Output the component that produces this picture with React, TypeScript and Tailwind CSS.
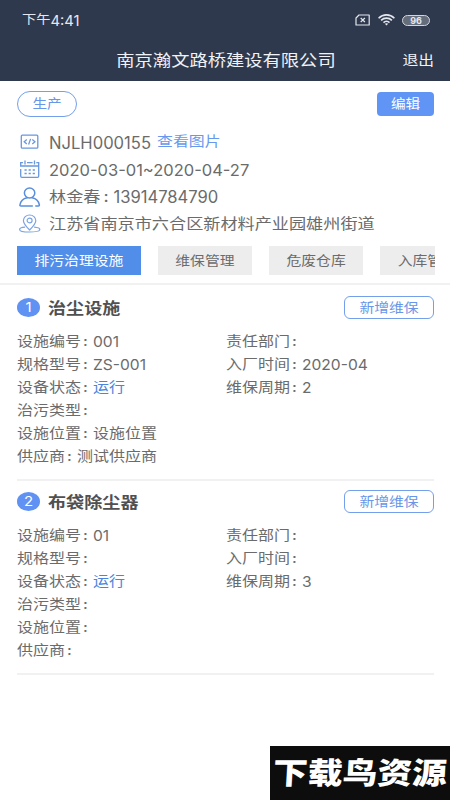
import type { ReactNode } from "react";
import clsx from "clsx";

interface Facility {
  name: string;
  left: [string, string][];
  right: [string, string][];
}

const TABS = ["排污治理设施", "维保管理", "危废仓库", "入库管理"];

const FACILITIES: Facility[] = [
  {
    name: "治尘设施",
    left: [
      ["设施编号", "001"],
      ["规格型号", "ZS-001"],
      ["设备状态", "运行"],
      ["治污类型", ""],
      ["设施位置", "设施位置"],
      ["供应商", "测试供应商"],
    ],
    right: [
      ["责任部门", ""],
      ["入厂时间", "2020-04"],
      ["维保周期", "2"],
    ],
  },
  {
    name: "布袋除尘器",
    left: [
      ["设施编号", "01"],
      ["规格型号", ""],
      ["设备状态", "运行"],
      ["治污类型", ""],
      ["设施位置", ""],
      ["供应商", ""],
    ],
    right: [
      ["责任部门", ""],
      ["入厂时间", ""],
      ["维保周期", "3"],
    ],
  },
];

// Wide, slightly flattened lettering used all over the app
function Label({ className, children }: { className?: string; children: ReactNode }) {
  return (
    <span className={clsx("inline-block scale-y-[0.87] whitespace-nowrap", className)}>
      {children}
    </span>
  );
}

// Codes, dates and phone numbers keep their full height
function Digits({ className, children }: { className?: string; children: ReactNode }) {
  return (
    <span className={clsx("inline-block translate-y-px whitespace-nowrap", className)}>
      {children}
    </span>
  );
}

function StatusBar() {
  return (
    <div className="flex h-10 items-center justify-between pl-[22px] pr-5 text-[#e4e7ee]">
      <div className="flex items-center pt-px">
        <Label className="text-[14.2px]">下午</Label>
        <Digits className="text-[14.8px]">4:41</Digits>
      </div>
      <div className="flex items-center gap-[7px]">
        <svg width="16" height="12" viewBox="0 0 16 12" fill="none" stroke="currentColor" strokeWidth="1.2">
          <path d="M4 1h10.2v10H1V4z" strokeLinejoin="round" />
          <path d="M5.7 4l4.2 4M9.9 4L5.7 8" />
        </svg>
        <svg width="17" height="12" viewBox="0 0 17 12" fill="none" stroke="currentColor" strokeWidth="1.6">
          <path d="M.6 4.2C5-.2 12-.2 16.4 4.2M3.1 6.4c3-3 7.8-3 10.8 0M5.5 8.6c1.7-1.7 4.3-1.7 6 0" />
          <path d="M6.8 9.8L8.5 11.5l1.7-1.7c-.9-.8-2.5-.8-3.4 0z" fill="currentColor" stroke="none" />
        </svg>
        <div className="flex h-[11px] w-7 items-center justify-center rounded-full border border-[#d3d6dc] bg-[#656d7b]">
          <span className="text-[9px] leading-none font-bold">96</span>
        </div>
      </div>
    </div>
  );
}

function CodeIcon() {
  return (
    <svg width="22" height="20" viewBox="0 0 22 20" fill="none" stroke="#6898e0" strokeWidth="1.3">
      <rect x="2.3" y="3.2" width="16.5" height="13" rx="1" />
      <path d="M7.8 7.5L5.2 9.7l2.6 2.2M13.3 7.5l2.6 2.2-2.6 2.2M11.6 6.9l-2 5.600" />
    </svg>
  );
}

function CalendarIcon() {
  return (
    <svg width="22" height="20" viewBox="0 0 22 20" fill="none" stroke="#6898e0" strokeWidth="1.3">
      <path d="M4 3.7H1.7V7h18V3.7h-2.4M8 3.7h5.6M1.7 10v7.1c0 .7.5 1.2 1.2 1.2h15.6c.7 0 1.2-.5 1.2-1.2V7" />
      <path d="M6 1.6v4M15.5 1.6v4" />
      <path d="M5.5 11H7.7M9.6 11h2.2M13.7 11h2.2M5.5 14.5H7.7M9.6 14.5h2.2M13.7 14.5h2.2" strokeWidth="1.5" />
    </svg>
  );
}

function UserIcon() {
  return (
    <svg width="22" height="20" viewBox="0 0 22 20" fill="none" stroke="#5a8edb" strokeWidth="1.5" strokeLinecap="round" className="translate-y-px">
      <ellipse cx="10.6" cy="6" rx="5.2" ry="4.9" />
      <path d="M13.3 19H1.9c-.7 0-1.1-.4-1-1 .7-4.1 4-6.500 7.300-7.200M13.100 10.800c3.300.7 6.600 3.100 7.300 7.200.1.6-.3 1-1 1h-2.600" />
    </svg>
  );
}

function PinIcon() {
  return (
    <svg width="22" height="20" viewBox="0 0 22 20" fill="none" stroke="#7ba4e2" strokeWidth="1.2">
      <path d="M10.600 16C6.600 12 4.400 9.600 4.400 6.700c0-3.200 2.800-5.700 6.200-5.700s6.200 2.500 6.200 5.700c0 2.900-2.200 5.300-6.200 9.300z" />
      <ellipse cx="10.6" cy="6.5" rx="2.5" ry="2.3" />
      <path d="M6.100 13.200C2.600 13.500.6 14.300.6 15.400c0 1.500 4.300 2.600 10 2.600s10.200-1.100 10.200-2.600c0-1.100-2.200-1.900-5.700-2.200" />
    </svg>
  );
}

function InfoRow({ icon, children }: { icon: ReactNode; children: ReactNode }) {
  return (
    <div className="flex h-[27.3px] items-center gap-2 text-[17.15px]">
      {icon}
      <div className="flex items-center pt-px">{children}</div>
    </div>
  );
}

function Field({ label, value }: { label: string; value: string }) {
  const isCode = /^[\w-]+$/.test(value);
  return (
    <div className="flex h-[23.15px] items-center text-[16px]">
      <Label>{label}</Label>
      <Label className="w-3 pl-[2px] font-medium">:</Label>
      {isCode ? (
        <Digits className="scale-y-[0.93] text-[15.6px]">{value}</Digits>
      ) : (
        <Label className={clsx(value === "运行" && "text-[#4a85dc]")}>{value}</Label>
      )}
    </div>
  );
}

function FacilityCard({ facility, index }: { facility: Facility; index: number }) {
  return (
    <section className="mr-4 ml-[17px] h-[194px] border-b-2 border-[#f1f1f1] pt-2">
      <div className="flex h-[25px] items-center">
        <div className="flex h-[19px] w-[23px] items-center justify-center rounded-[50%] bg-[#5f92f3] text-white">
          <Label className="text-[15px]">{index + 1}</Label>
        </div>
        <Label className="ml-2 text-[18.1px] font-bold text-[#505050]">{facility.name}</Label>
        <button className="ml-auto flex h-[23px] w-[90px] items-center justify-center rounded-md border border-[#739feb] pt-px text-[#6896e8]">
          <Label className="text-[14.8px]">新增维保</Label>
        </button>
      </div>
      <div className="mt-[9px] grid grid-cols-[209px_1fr]">
        <div>
          {facility.left.map(([label, value]) => (
            <Field key={label} label={label} value={value} />
          ))}
        </div>
        <div>
          {facility.right.map(([label, value]) => (
            <Field key={label} label={label} value={value} />
          ))}
        </div>
      </div>
    </section>
  );
}

export default function App() {
  return (
    <div className="relative h-[800px] w-[450px] overflow-hidden bg-white font-['Inter','Noto_Sans_CJK_SC',sans-serif] leading-none text-[#6b6b6b]">
      <header className="h-[81px] bg-[#2f394d] text-[#f0f2f6]">
        <StatusBar />
        <div className="grid h-10 grid-cols-[1fr_auto_1fr] items-center pr-4">
          <span />
          <Label className="pl-[18px] text-[18.3px]">南京瀚文路桥建设有限公司</Label>
          <Label className="justify-self-end pt-px text-[15.8px]">退出</Label>
        </div>
      </header>

      <div className="flex h-[46px] items-center justify-between pr-4 pl-[17px]">
        <div className="flex h-[26px] w-[60px] items-center justify-center rounded-full border border-[#739feb] pt-px text-[#6896e8]">
          <Label className="text-[14.6px]">生产</Label>
        </div>
        <button className="flex h-6 w-[57px] items-center justify-center rounded bg-[#6094f5] pt-px text-white">
          <Label className="text-[14.6px]">编辑</Label>
        </button>
      </div>

      <div className="mt-px pl-[19px]">
        <InfoRow icon={<CodeIcon />}>
          <Digits className="text-[16.6px]">NJLH000155</Digits>
          <Label className="ml-[6px] text-[15.9px] text-[#6898ee]">查看图片</Label>
        </InfoRow>
        <InfoRow icon={<CalendarIcon />}>
          <Digits className="text-[16.5px]">2020-03-01~2020-04-27</Digits>
        </InfoRow>
        <InfoRow icon={<UserIcon />}>
          <Label>林金春</Label>
          <Label className="w-[13px] pl-[3px] font-medium">:</Label>
          <Digits className="text-[16.6px]">13914784790</Digits>
        </InfoRow>
        <InfoRow icon={<PinIcon />}>
          <Label>江苏省南京市六合区新材料产业园雄州街道</Label>
        </InfoRow>
      </div>

      <nav className="mr-[15px] ml-[17px] mt-[9px] flex h-[29px] gap-[17px] overflow-hidden">
        {TABS.map((tab, i) => (
          <button
            key={tab}
            className={clsx(
              "flex shrink-0 items-center px-[17.5px] pt-px",
              i === 0 ? "bg-[#508eea] text-white" : "bg-[#ededed]",
            )}
          >
            <Label className="text-[14.8px]">{tab}</Label>
          </button>
        ))}
      </nav>

      <main className="mt-2 border-t-2 border-[#f1f1f1] pt-[2px]">
        {FACILITIES.map((facility, i) => (
          <FacilityCard key={facility.name} facility={facility} index={i} />
        ))}
      </main>

      <div className="absolute right-0 bottom-0 flex h-[54px] w-[180px] items-center justify-center bg-[#0d0d0d] text-white">
        <Label className="-skew-x-3 text-[34.8px] font-black">下载鸟资源</Label>
      </div>
    </div>
  );
}
